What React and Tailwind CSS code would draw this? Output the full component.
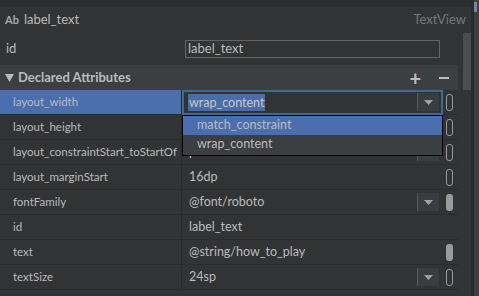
import React from 'react';

const rows = [
    { name: 'layout_width', value: 'wrap_content', selected: true, arrow: true, pin: 'outline' },
    { name: 'layout_height', value: 'wrap_content', arrow: true, pin: 'outline' },
    { name: 'layout_constraintStart_toStartOf', value: 'parent', arrow: true, pin: 'outline' },
    { name: 'layout_marginStart', value: '16dp', pin: 'outline' },
    { name: 'fontFamily', value: '@font/roboto', arrow: true, pin: 'filled' },
    { name: 'id', value: 'label_text' },
    { name: 'text', value: '@string/how_to_play', pin: 'filled' },
    { name: 'textSize', value: '24sp', arrow: true, pin: 'outline' },
];

function Arrow() {
    return (
        <div className="w-[22px] h-[18px] bg-[#3a3d3f] border-l border-[#55585a] flex items-center justify-center">
            <svg width="9" height="5" viewBox="0 0 9 5">
                <path d="M0 0 L9 0 L4.5 5 Z" fill="#a0a0a0" />
            </svg>
        </div>
    );
}

function Pin({ kind }) {
    if (!kind) return <div className="w-[7px]" />;
    if (kind === 'filled') {
        return <div className="w-[7px] h-[17px] rounded-[3px] bg-[#9a9a9a]" />;
    }
    return <div className="w-[7px] h-[17px] rounded-[3px] border border-[#9a9a9a]" />;
}

function Row({ row }) {
    return (
        <div className="flex h-[25px] border-b border-[#2b2b2b]">
            <div className={`w-[182px] flex items-center pl-[13px] border-r border-[#2b2b2b] ${row.selected ? 'bg-[#4b6eaf]' : ''}`}>
                <span className="whitespace-nowrap text-[11.5px]">{row.name}</span>
            </div>
            <div className="flex-1 flex items-center pr-[5px]">
                {row.selected ? (
                    <div className="relative w-[261px] h-[25px] border-2 border-[#3f6a94] flex items-center pl-[4px] pr-[2px]">
                        <span className="bg-[#4a6da7] text-[#c8c8c8] leading-[17px] px-[1px]">wrap_content</span>
                        <div className="ml-auto"><Arrow /></div>
                        <div className="absolute left-[-2px] top-[23px] w-[261px] h-[41px] bg-[#3c3f41] border border-black z-10 flex flex-col">
                            <div className="h-[19px] bg-[#4b6eaf] flex items-center pl-[14px]">match_constraint</div>
                            <div className="h-[20px] flex items-center pl-[14px]">wrap_content</div>
                        </div>
                    </div>
                ) : (
                    <div className="w-[261px] flex items-center pl-[7px] pr-[4px]">
                        <span className="whitespace-nowrap">{row.value}</span>
                        {row.arrow && <div className="ml-auto"><Arrow /></div>}
                    </div>
                )}
                <div className="ml-auto flex items-center"><Pin kind={row.pin} /></div>
            </div>
        </div>
    );
}

export default function App() {
    return (
        <div className="w-[479px] h-[296px] flex bg-[#313335] text-[#bbbbbb] text-[12.5px] overflow-hidden" style={{ fontFamily: 'Lato, "Noto Sans", sans-serif' }}>
            <div className="w-[471px] flex flex-col">
                <div className="h-[7px] bg-[#2b2d2f]" />
                <div className="h-[26px] flex items-center pl-[5px] pr-[5px]">
                    <span className="font-bold text-[11px] text-[#a9a9a9]">Ab</span>
                    <span className="ml-[5px] text-[13px]">label_text</span>
                    <span className="ml-auto text-[#787878] text-[13px]">TextView</span>
                </div>
                <div className="flex flex-1">
                    <div className="w-[458px] flex flex-col">
                        <div className="h-[32px] flex items-center">
                            <div className="w-[185px] pl-[6px] text-[13px]">id</div>
                            <div className="w-[255px] h-[18px] border border-[#646464] flex items-center pl-[2px] text-[13px]">label_text</div>
                        </div>
                        <div className="h-[25px] bg-[#3c3f41] flex items-center pl-[5px] pr-[9px]">
                            <svg width="9" height="9" viewBox="0 0 9 9">
                                <path d="M0 1 L9 1 L4.5 9 Z" fill="#bbbbbb" />
                            </svg>
                            <span className="ml-[4px] font-bold text-[13px]">Declared Attributes</span>
                            <span className="ml-auto text-[20px] leading-none font-bold">+</span>
                            <span className="ml-[18px] w-[10px] h-[2px] bg-[#bbbbbb]" />
                        </div>
                        {rows.map((r, i) => <Row key={i} row={r} />)}
                    </div>
                    <div className="flex-1 flex justify-end">
                        <div className="w-[8px] h-[57px] bg-[#4a4d50]" />
                    </div>
                </div>
            </div>
            <div className="w-[2px] bg-[#2b2b2b]" />
            <div className="flex-1 bg-[#3c3f41] border-l border-[#2b2b2b] pt-[2px]">
                <div className="w-[3px] h-[10px] bg-[#6a8aa8]" />
            </div>
        </div>
    );
}
